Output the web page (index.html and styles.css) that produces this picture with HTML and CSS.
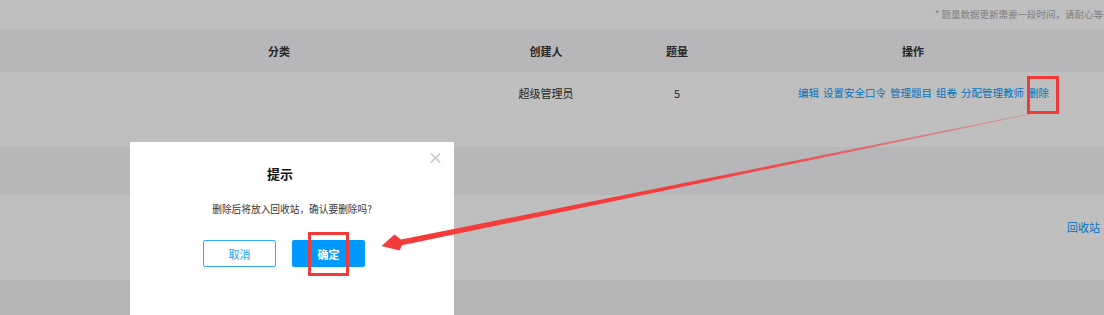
FILE: index.html
```html
<!DOCTYPE html>
<html lang="zh-CN">
<head>
    <meta charset="UTF-8">
    <title>题库管理</title>
    <link rel="stylesheet" href="styles.css">
</head>
<body>
    <div class="page">
        <div class="notice">* 题量数据更新需要一段时间，请耐心等待</div>

        <div class="grid table-head">
            <div></div>
            <div class="cell">分类</div>
            <div class="cell">创建人</div>
            <div class="cell">题量</div>
            <div class="cell ops-head">操作</div>
        </div>

        <div class="grid table-row">
            <div></div>
            <div class="cell"></div>
            <div class="cell">超级管理员</div>
            <div class="cell">5</div>
            <div class="cell ops">
                <a href="#">编辑</a>
                <a href="#">设置安全口令</a>
                <a href="#">管理题目</a>
                <a href="#">组卷</a>
                <a href="#">分配管理教师</a>
                <a href="#">删除</a>
            </div>
        </div>

        <div class="band"></div>

        <div class="bottom-row">
            <a href="#">回收站</a>
        </div>

        <div class="band band-last"></div>
    </div>

    <div class="mask"></div>

    <div class="dialog">
        <span class="close"></span>
        <div class="dialog-title">提示</div>
        <div class="dialog-msg">删除后将放入回收站，确认要删除吗?</div>
        <div class="dialog-btns">
            <button class="btn btn-cancel">取消</button>
            <button class="btn btn-ok">确定</button>
        </div>
    </div>

    <!-- annotations -->
    <div class="mark mark-del"></div>
    <div class="mark mark-ok"></div>
    <svg class="arrow" width="1104" height="315" viewBox="0 0 1104 315">
        <defs>
            <linearGradient id="fade" x1="1040" y1="0" x2="700" y2="0" gradientUnits="userSpaceOnUse">
                <stop offset="0" stop-color="#f43c3c" stop-opacity="0.25"/>
                <stop offset="1" stop-color="#f43c3c" stop-opacity="1"/>
            </linearGradient>
        </defs>
        <polygon fill="url(#fade)"
            points="1040,111.6 401,239.6 394.5,234.5 381.5,246 399.5,250.5 402,245.2 1040,112.4"/>
    </svg>
</body>
</html>
```

FILE: styles.css
```css
body {
    margin: 0;
    font-family: "Noto Sans CJK SC", "Microsoft YaHei", sans-serif;
    background: #fff;
    overflow: hidden;
}
.page {
    width: 1104px;
    height: 315px;
    display: flex;
    flex-direction: column;
}
.notice {
    height: 29px;
    line-height: 29px;
    padding-left: 935px;
    font-size: 9.5px;
    color: #aaa;
    white-space: nowrap;
    overflow: hidden;
}
.grid {
    display: grid;
    grid-template-columns: 60px 438px 96px 166px 1fr;
}
.table-head {
    height: 43px;
    background: #f5f5f7;
    align-items: center;
    font-size: 11px;
    font-weight: bold;
    color: #333;
}
.cell {
    text-align: center;
    white-space: nowrap;
}
.ops-head {
    padding-right: 38px;
}
.table-row {
    height: 75px;
    align-items: start;
    padding-top: 14px;
    box-sizing: border-box;
    font-size: 11px;
    line-height: 14px;
    color: #333;
}
.ops {
    display: flex;
    gap: 4px;
    padding-left: 38px;
    font-size: 10.5px;
}
a {
    color: #0099ff;
    text-decoration: none;
}
.band {
    height: 48px;
    background: #f5f5f7;
}
.bottom-row {
    height: 85px;
    box-sizing: border-box;
    padding: 25px 4px 0 0;
    display: flex;
    justify-content: flex-end;
    align-items: flex-start;
    font-size: 11px;
    line-height: 14px;
}
.band-last {
    flex: 1;
    background: #f2f2f5;
}
.mask {
    position: fixed;
    inset: 0;
    background: rgba(0, 0, 0, 0.25);
}
.dialog {
    position: absolute;
    left: 130px;
    top: 142px;
    width: 324px;
    height: 173px;
    background: #fff;
    display: flex;
    flex-direction: column;
    align-items: center;
}
.close {
    position: absolute;
    top: 10px;
    right: 13px;
    width: 11px;
    height: 11px;
}
.close::before, .close::after {
    content: "";
    position: absolute;
    left: -1px;
    top: 4.5px;
    width: 13px;
    height: 2px;
    background: #cfcfcf;
    transform: rotate(45deg);
}
.close::after {
    transform: rotate(-45deg);
}
.dialog-title {
    margin-top: 24px;
    margin-right: 24px;
    line-height: 16px;
    font-size: 13px;
    font-weight: bold;
    color: #111;
}
.dialog-msg {
    margin-top: 19px;
    line-height: 16px;
    font-size: 9.7px;
    color: #333;
}
.dialog-btns {
    margin-top: 23px;
    margin-right: 16px;
    display: flex;
    gap: 16px;
}
.btn {
    width: 73px;
    height: 27px;
    border-radius: 2px;
    font-family: inherit;
    font-size: 11px;
    cursor: pointer;
}
.btn-cancel {
    background: #fff;
    border: 1px solid #33a9ff;
    color: #1a9fff;
}
.btn-ok {
    background: #0099ff;
    border: none;
    color: #fff;
    font-weight: bold;
}
.mark {
    position: absolute;
    border: 3px solid #f03a3a;
    box-sizing: border-box;
}
.mark-del {
    left: 1027px;
    top: 76px;
    width: 32px;
    height: 38px;
}
.mark-ok {
    left: 308px;
    top: 232px;
    width: 41px;
    height: 44px;
}
.arrow {
    position: absolute;
    left: 0;
    top: 0;
    pointer-events: none;
}
```
